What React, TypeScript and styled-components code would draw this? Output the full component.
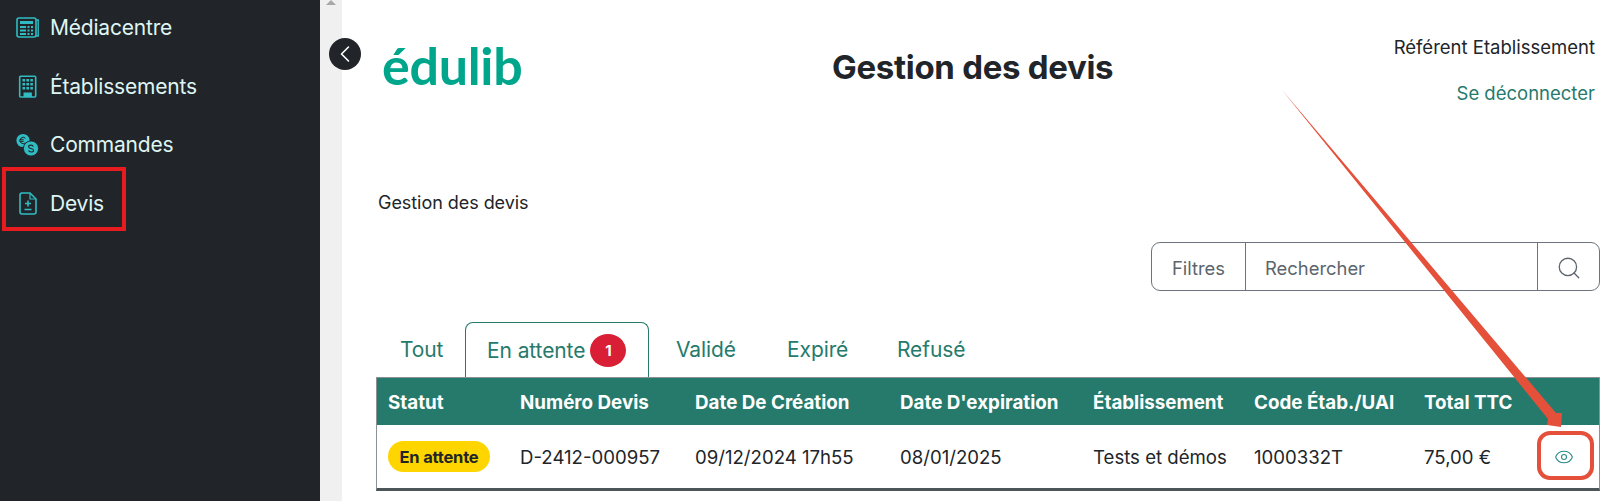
import React from 'react';
import styled, { createGlobalStyle } from 'styled-components';
import { ChevronLeft, Eye, Search } from 'lucide-react';

const GlobalStyle = createGlobalStyle`
	html, body { margin: 0; padding: 0; background: #fff; }
	body { font-family: Inter, "Liberation Sans", sans-serif; color: #212529; }
`;

const Page = styled.div`
	position: relative;
	display: flex;
	width: 1617px;
	height: 501px;
	overflow: hidden;
`;

const Sidebar = styled.nav`
	flex: 0 0 320px;
	background: #212529;
	display: flex;
	flex-direction: column;
`;

const NavItem = styled.a`
	display: flex;
	align-items: center;
	height: 58.7px;
	padding-left: 16px;
	gap: 11px;
	color: #dff5f3;
	font-size: 21px;
	letter-spacing: -0.2px;
	&:first-child { margin-top: -2px; }
	svg { flex: 0 0 23px; }
`;

const ScrollTrack = styled.div`
	flex: 0 0 22px;
	background: #f0f0f0;
	display: flex;
	justify-content: center;
`;

const ScrollUp = styled.div`
	width: 0;
	height: 0;
	border-left: 5px solid transparent;
	border-right: 5px solid transparent;
	border-bottom: 5px solid #a8a8a8;
`;

const CollapseButton = styled.button`
	position: absolute;
	left: 329px;
	top: 38px;
	width: 32px;
	height: 32px;
	border: 0;
	border-radius: 50%;
	padding: 0;
	background: #212529;
	color: #fff;
	display: flex;
	align-items: center;
	justify-content: center;
`;

const Main = styled.main`
	flex: 1;
	min-width: 0;
	padding: 0 17px 0 35px;
	display: flex;
	flex-direction: column;
`;

const Header = styled.header`
	display: grid;
	grid-template-columns: 455px 1fr auto;
	height: 120px;
	padding-right: 5px;
`;

const Logo = styled.div`
	margin: 35px 0 0 5px;
	font-family: Lato, sans-serif;
	font-weight: 700;
	font-size: 52px;
	line-height: 60px;
	letter-spacing: -0.3px;
	color: #00a68c;
`;

const Title = styled.h1`
	margin: 49px 0 0;
	font-size: 33px;
	line-height: 36px;
	font-weight: 700;
	letter-spacing: -0.3px;
	color: #212529;
`;

const UserBlock = styled.div`
	display: flex;
	flex-direction: column;
	align-items: flex-end;
	gap: 24px;
	padding-top: 36px;
	font-size: 18.5px;
	line-height: 22px;
`;

const Logout = styled.a`
	color: #267a6c;
`;

const Breadcrumb = styled.div`
	margin: 72px 0 0 1px;
	font-size: 18px;
	line-height: 22px;
	letter-spacing: -0.05px;
`;

const SearchBar = styled.div`
	align-self: flex-end;
	display: flex;
	box-sizing: border-box;
	width: 449px;
	height: 49px;
	margin-top: 28px;
	border: 1px solid #6c757d;
	border-radius: 9px;
	font-size: 18.4px;
	color: #5c656d;
`;

const SearchCell = styled.div<{ $width?: number; $grow?: boolean }>`
	display: flex;
	align-items: center;
	justify-content: ${(p) => (p.$grow ? 'flex-start' : 'center')};
	box-sizing: border-box;
	flex: ${(p) => (p.$grow ? '1' : `0 0 ${p.$width}px`)};
	padding-left: ${(p) => (p.$grow ? '19px' : '0')};
	padding-top: 3px;
	& + & { border-left: 1px solid #6c757d; }
`;

const Tabs = styled.div`
	display: flex;
	height: 55px;
	margin-top: 31px;
	font-size: 21px;
	letter-spacing: -0.1px;
`;

const Tab = styled.a<{ $active?: boolean; $width: number; $pad: number }>`
	display: flex;
	align-items: center;
	box-sizing: border-box;
	gap: 5px;
	flex: 0 0 ${(p) => p.$width}px;
	padding-left: ${(p) => p.$pad}px;
	color: #267a6c;
	${(p) => p.$active && `
		border: 1px solid #267a6c;
		border-bottom: 0;
		border-radius: 8px 8px 0 0;
	`}
`;

const Badge = styled.span`
	display: flex;
	align-items: center;
	justify-content: center;
	width: 36px;
	height: 33px;
	border-radius: 50%;
	background: #d81f36;
	color: #fff;
	font-size: 15px;
	font-weight: 700;
`;

const Table = styled.div`
	width: 1224px;
	margin-left: -1px;
	box-sizing: border-box;
	border: 1px solid #8a9296;
	border-bottom: 3px solid #4c5659;
`;

const Row = styled.div<{ $head?: boolean }>`
	display: grid;
	grid-template-columns: 132px 175px 205px 193px 161px 170px 115px 71px;
	align-items: center;
	height: ${(p) => (p.$head ? 47 : 63)}px;
	background: ${(p) => (p.$head ? '#267a6c' : '#fff')};
	color: ${(p) => (p.$head ? '#fff' : '#212529')};
	font-weight: ${(p) => (p.$head ? 700 : 400)};
	font-size: ${(p) => (p.$head ? 18.8 : 18.6)}px;
	padding-top: ${(p) => (p.$head ? 1 : 0)}px;
	box-sizing: border-box;
`;

const Cell = styled.div`
	padding-left: 11px;
	white-space: nowrap;
`;

const StatusPill = styled.span`
	display: inline-flex;
	align-items: center;
	justify-content: center;
	width: 102px;
	height: 31px;
	border-radius: 16px;
	background: #ffd500;
	font-size: 16.5px;
	font-weight: 700;
	letter-spacing: -0.2px;
`;

const ActionCell = styled(Cell)`
	display: flex;
	justify-content: center;
	padding-left: 0;
	color: #2b8a8a;
`;

const HighlightBox = styled.div`
	position: absolute;
	left: 2px;
	top: 167px;
	width: 124px;
	height: 64px;
	box-sizing: border-box;
	border: 4px solid #e81c1f;
`;

const EyeHighlight = styled.div`
	position: absolute;
	left: 1537px;
	top: 431px;
	width: 57px;
	height: 49px;
	box-sizing: border-box;
	border: 4px solid #e4503a;
	border-radius: 13px;
`;

const ArrowLayer = styled.svg`
	position: absolute;
	left: 0;
	top: 0;
	pointer-events: none;
`;

const ICON = '#2fbcc2';

function MediaIcon() {
	return (
		<svg width="23" height="21" viewBox="0 0 23 21" fill="none">
			<path d="M20 3h2.2v16H20" stroke={ICON} strokeWidth="1.4" />
			<rect x="1" y="1" width="19" height="19" rx="2" stroke={ICON} strokeWidth="1.6" />
			<path d="M4 4h13v3H4zM4 9h6v2H4zM4 12.5h6v2H4zM4 16h6v2H4zM11.5 9h2v2h-2zM15 9h2v2h-2zM11.5 12.5h2v2h-2zM15 12.5h2v2h-2zM11.5 16h2v2h-2zM15 16h2v2h-2z" fill={ICON} />
		</svg>
	);
}

function BuildingIcon() {
	return (
		<svg width="23" height="23" viewBox="0 0 23 23" fill="none">
			<rect x="3.7" y="1.2" width="16" height="20.8" rx="1" stroke={ICON} strokeWidth="1.6" fill="#212529" />
			<path d="M6.5 4h2.6v2.6H6.5zM10.4 4H13v2.6h-2.6zM14.3 4h2.6v2.6h-2.6zM6.5 8h2.6v2.6H6.5zM10.4 8H13v2.6h-2.6zM14.3 8h2.6v2.6h-2.6zM6.5 12h2.6v2.6H6.5zM10.4 12H13v2.6h-2.6zM14.3 12h2.6v2.6h-2.6z" fill={ICON} />
			<path d="M7.5 22v-4.5h8.4V22z" fill={ICON} />
		</svg>
	);
}

function CoinsIcon() {
	return (
		<svg width="23" height="23" viewBox="0 0 23 23" fill="none">
			<circle cx="7" cy="7.5" r="6.6" fill={ICON} />
			<path d="M9.4 5.2a3.2 3.2 0 1 0 0 4.6M3.6 6.7h4M3.6 8.4h4" stroke="#212529" strokeWidth="1" />
			<circle cx="15" cy="15.5" r="7.6" fill={ICON} stroke="#212529" strokeWidth="1" />
			<path d="M17.4 13.4c-.5-1-1.5-1.3-2.5-1.3-1.3 0-2.3.7-2.3 1.7 0 2.4 5 1.1 5 3.6 0 1-1.1 1.6-2.5 1.6-1.1 0-2.1-.5-2.6-1.4" stroke="#212529" strokeWidth="1.1" />
		</svg>
	);
}

function QuoteIcon() {
	return (
		<svg width="23" height="23" viewBox="0 0 23 23" fill="none">
			<path d="M6 1h8l6 6v13a2 2 0 0 1-2 2H6a2 2 0 0 1-2-2V3a2 2 0 0 1 2-2z" stroke={ICON} strokeWidth="1.6" />
			<path d="M14 1v6h6" stroke={ICON} strokeWidth="1.2" />
			<path d="M12 8.5v6M9 11.5h6M8.5 17.5h7" stroke={ICON} strokeWidth="1.6" />
		</svg>
	);
}

const NAV_ITEMS = [
	{ label: 'Médiacentre', icon: <MediaIcon /> },
	{ label: 'Établissements', icon: <BuildingIcon /> },
	{ label: 'Commandes', icon: <CoinsIcon /> },
	{ label: 'Devis', icon: <QuoteIcon /> },
];

const TABS = [
	{ label: 'Tout', width: 88, pad: 23 },
	{ label: 'En attente', width: 184, pad: 21, active: true, count: 1 },
	{ label: 'Validé', width: 111, pad: 27 },
	{ label: 'Expiré', width: 110, pad: 27 },
	{ label: 'Refusé', width: 110, pad: 27 },
];

const COLUMNS = ['Statut', 'Numéro Devis', 'Date De Création', "Date D'expiration", 'Établissement', 'Code Étab./UAI', 'Total TTC', ''];

export default function App() {
	return (
		<Page>
			<GlobalStyle />
			<Sidebar>
				{NAV_ITEMS.map((item) => (
					<NavItem key={item.label}>
						{item.icon}
						{item.label}
					</NavItem>
				))}
			</Sidebar>
			<ScrollTrack>
				<ScrollUp />
			</ScrollTrack>
			<Main>
				<Header>
					<Logo>édulib</Logo>
					<Title>Gestion des devis</Title>
					<UserBlock>
						<span>Référent Etablissement</span>
						<Logout>Se déconnecter</Logout>
					</UserBlock>
				</Header>
				<Breadcrumb>Gestion des devis</Breadcrumb>
				<SearchBar>
					<SearchCell $width={93}>Filtres</SearchCell>
					<SearchCell $grow>Rechercher</SearchCell>
					<SearchCell $width={62}>
						<Search size={26} strokeWidth={1.2} />
					</SearchCell>
				</SearchBar>
				<Tabs>
					{TABS.map((tab) => (
						<Tab key={tab.label} $active={tab.active} $width={tab.width} $pad={tab.pad}>
							{tab.label}
							{tab.count && <Badge>{tab.count}</Badge>}
						</Tab>
					))}
				</Tabs>
				<Table>
					<Row $head>
						{COLUMNS.map((column) => (
							<Cell key={column}>{column}</Cell>
						))}
					</Row>
					<Row>
						<Cell>
							<StatusPill>En attente</StatusPill>
						</Cell>
						<Cell>D-2412-000957</Cell>
						<Cell>09/12/2024 17h55</Cell>
						<Cell>08/01/2025</Cell>
						<Cell>Tests et démos</Cell>
						<Cell>1000332T</Cell>
						<Cell>75,00 €</Cell>
						<ActionCell>
							<Eye size={20} strokeWidth={1.3} />
						</ActionCell>
					</Row>
				</Table>
			</Main>
			<CollapseButton>
				<ChevronLeft size={28} strokeWidth={1.4} />
			</CollapseButton>
			<HighlightBox />
			<ArrowLayer width="1617" height="501">
				<polygon points="1282,90 1556,413 1562,413 1561,427 1547,425 1548,419" fill="#e4503a" />
			</ArrowLayer>
			<EyeHighlight />
		</Page>
	);
}
